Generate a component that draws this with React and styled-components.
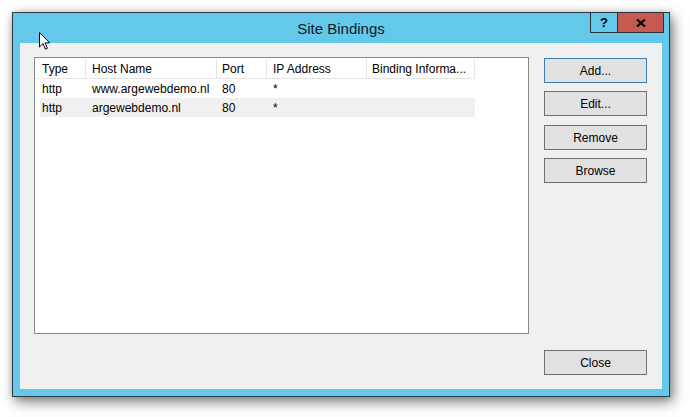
import React from "react";
import styled, { createGlobalStyle } from "styled-components";

const GlobalStyle = createGlobalStyle`
  html, body { margin: 0; padding: 0; background: #ffffff; }
  body { font-family: "Liberation Sans", Arial, sans-serif; font-size: 12px; color: #000; }
  * { box-sizing: border-box; }
`;

const Page = styled.div`
  width: 690px;
  height: 417px;
  padding: 12px 0 0 12px;
  position: relative;
  overflow: hidden;
`;

const Window = styled.div`
  width: 658px;
  height: 385px;
  border: 1px solid #2f3b42;
  background: #64c8ea;
  box-shadow: 3px 5px 12px rgba(0, 0, 0, 0.5), 0 0 6px rgba(0, 0, 0, 0.15);
  display: flex;
  flex-direction: column;
  position: relative;
`;

const TitleBar = styled.div`
  height: 30px;
  display: flex;
  align-items: center;
  justify-content: center;
  position: relative;
`;

const Title = styled.span`
  font-size: 15px;
  color: #0f1a20;
`;

const CaptionButtons = styled.div`
  position: absolute;
  top: -1px;
  right: 5px;
  display: flex;
  height: 21px;
`;

const CaptionButton = styled.div`
  width: ${(p) => p.$w}px;
  height: 21px;
  background: ${(p) => (p.$close ? "#c75a50" : "#64c8ea")};
  border: 1px solid #2f3136;
  border-left-width: ${(p) => (p.$close ? 0 : 1)}px;
  display: flex;
  align-items: center;
  justify-content: center;
  font-weight: bold;
  font-size: 13px;
  color: #000;
`;

const Client = styled.div`
  margin: 0 7px 7px 7px;
  flex: 1;
  background: #f0f0f0;
  display: flex;
  gap: 15px;
  padding: 14px 15px 14px 14px;
`;

const List = styled.div`
  width: 495px;
  height: 277px;
  border: 1px solid #828790;
  background: #ffffff;
  flex-shrink: 0;
`;

const HeaderRow = styled.div`
  display: grid;
  grid-template-columns: 51px 131px 50px 100px 108px;
  height: 20px;
  margin-top: 1px;
`;

const HeaderCell = styled.div`
  border-right: 1px solid #e5e5e5;
  border-bottom: 1px solid #e5e5e5;
  padding-left: ${(p) => p.$pl ?? 6}px;
  display: flex;
  align-items: center;
  white-space: nowrap;
  overflow: hidden;
`;

const Row = styled.div`
  display: grid;
  grid-template-columns: 46px 131px 50px 100px 108px;
  height: 19px;
  margin-left: 5px;
  width: 435px;
  background: ${(p) => (p.$alt ? "#f0f0f0" : "transparent")};
`;

const Cell = styled.div`
  padding-left: ${(p) => p.$pl ?? 6}px;
  padding-top: 1px;
  display: flex;
  align-items: center;
  white-space: nowrap;
`;

const ButtonColumn = styled.div`
  display: flex;
  flex-direction: column;
  padding-top: 1px;
  flex: 1;
`;

const Button = styled.div`
  width: 103px;
  height: 25px;
  background: #e1e1e1;
  border: 1px solid ${(p) => (p.$default ? "#3c7fb1" : "#707070")};
  display: flex;
  align-items: center;
  justify-content: center;
  color: #000;
  margin-bottom: ${(p) => p.$mb ?? 8}px;
`;

const Spacer = styled.div`
  flex: 1;
`;

const Cursor = styled.svg`
  position: absolute;
  left: 39px;
  top: 32px;
`;

const rows = [
  ["http", "www.argewebdemo.nl", "80", "*", ""],
  ["http", "argewebdemo.nl", "80", "*", ""],
];

export default function App() {
  return (
    <>
      <GlobalStyle />
      <Page>
        <Window>
          <TitleBar>
            <Title>Site Bindings</Title>
            <CaptionButtons>
              <CaptionButton $w={28}>?</CaptionButton>
              <CaptionButton $w={46} $close>
                <svg width="10" height="8" viewBox="0 0 10 8">
                  <path d="M1 0.5 L9 7.5 M9 0.5 L1 7.5" stroke="#000" strokeWidth="2.2" />
                </svg>
              </CaptionButton>
            </CaptionButtons>
          </TitleBar>
          <Client>
            <List>
              <HeaderRow>
                <HeaderCell $pl={7}>Type</HeaderCell>
                <HeaderCell>Host Name</HeaderCell>
                <HeaderCell $pl={5}>Port</HeaderCell>
                <HeaderCell>IP Address</HeaderCell>
                <HeaderCell $pl={5}>Binding Informa...</HeaderCell>
              </HeaderRow>
              {rows.map((r, i) => (
                <Row key={i} $alt={i % 2 === 1}>
                  <Cell $pl={2}>{r[0]}</Cell>
                  <Cell>{r[1]}</Cell>
                  <Cell $pl={5}>{r[2]}</Cell>
                  <Cell>{r[3]}</Cell>
                  <Cell>{r[4]}</Cell>
                </Row>
              ))}
            </List>
            <ButtonColumn>
              <Button $default>Add...</Button>
              <Button $mb={9}>Edit...</Button>
              <Button>Remove</Button>
              <Button $mb={0}>Browse</Button>
              <Spacer />
              <Button $mb={0}>Close</Button>
            </ButtonColumn>
          </Client>
        </Window>
        <Cursor width="12" height="19" viewBox="0 0 12 19">
          <path
            d="M0.5 0.5 L0.5 15 L4 11.6 L6.4 17.2 L8.4 16.3 L6.1 10.9 L10.8 10.9 Z"
            fill="#fff"
            stroke="#000"
            strokeWidth="1"
            strokeLinejoin="miter"
          />
        </Cursor>
      </Page>
    </>
  );
}
